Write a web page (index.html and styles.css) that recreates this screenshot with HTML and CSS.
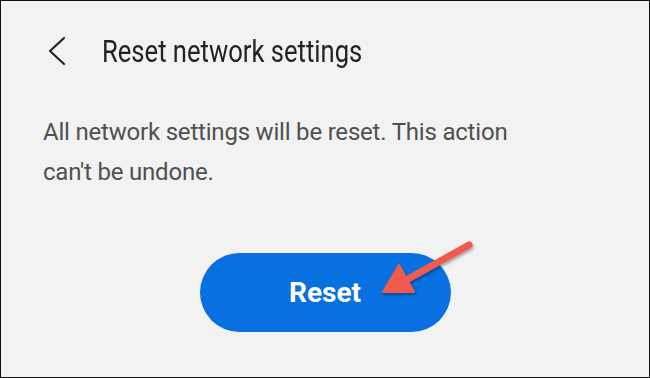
FILE: index.html
```html
<!DOCTYPE html>
<html>
<head>
<meta charset="utf-8">
<link rel="stylesheet" href="styles.css">
</head>
<body>
<div class="screen">
  <header class="bar">
    <svg class="back" width="20" height="30" viewBox="0 0 20 30"><path d="M17 2 L3 15 L17 28" fill="none" stroke="#232323" stroke-width="2.2" stroke-linecap="round" stroke-linejoin="round"/></svg>
    <h1 class="title">Reset network settings</h1>
  </header>
  <p class="msg">All network settings will be reset. This action can't be undone.</p>
  <div class="actions">
    <div class="btnwrap">
      <button class="reset">Reset</button>
      <svg class="arrow" width="110" height="80" viewBox="0 0 110 80">
        <defs><filter id="sh" x="-20%" y="-20%" width="140%" height="140%"><feDropShadow dx="1" dy="2" stdDeviation="1.5" flood-color="#000" flood-opacity="0.35"/></filter></defs>
        <g filter="url(#sh)">
          <line x1="91" y1="12" x2="30" y2="46" stroke="#f25a4d" stroke-width="7" stroke-linecap="round"/>
          <path d="M5 59 L21 32 L36 59 Z" fill="#f25a4d" stroke="#f25a4d" stroke-width="2" stroke-linejoin="round"/>
        </g>
      </svg>
    </div>
  </div>
</div>
</body>
</html>
```
FILE: styles.css
```css
html, body { margin: 0; padding: 0; }
body { width: 650px; height: 378px; overflow: hidden; font-family: Roboto, "Noto Sans", sans-serif; }
.screen {
  box-sizing: border-box;
  width: 650px; height: 378px;
  border: 1px solid #111;
  background: #f2f2f2;
  padding: 0 0 0 42px;
}
.bar { display: flex; align-items: center; height: 100px; }
.back { margin-left: 4px; flex: none; }
.title {
  margin: 0 0 0 35px; font-weight: 400; font-size: 32px; color: #232323;
  white-space: nowrap; transform: scaleX(0.8); transform-origin: left center;
}
.msg { margin: 11px 0 0 0; width: 490px; font-size: 24px; line-height: 40px; color: #505050; letter-spacing: -0.2px; }
.actions { display: flex; justify-content: center; padding-right: 42px; margin-top: 61px; }
.btnwrap { position: relative; }
.reset {
  display: block;
  width: 251px; height: 79px; border: none; border-radius: 40px;
  background: #0870e0; color: #fff; font-family: Roboto, sans-serif; font-weight: 700; font-size: 28px;
}
.arrow { position: absolute; left: 178px; top: -20px; }
```
